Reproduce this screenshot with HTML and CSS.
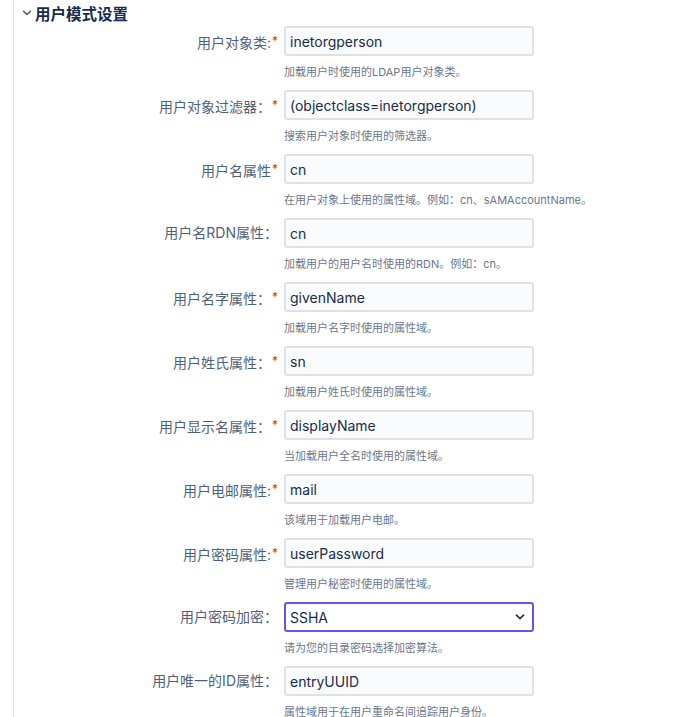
FILE: index.html
```html
<!DOCTYPE html>
<html lang="zh-CN">
<head>
    <meta charset="UTF-8">
    <title>用户模式设置</title>
    <link rel="stylesheet" href="styles.css">
</head>
<body>
    <div class="panel">
        <h2 class="section-title">
            <svg class="chevron" width="10" height="6" viewBox="0 0 10 6"><path d="M1.5 1.2 5 4.6 8.5 1.2" fill="none" stroke="#42526e" stroke-width="1.4" stroke-linecap="round" stroke-linejoin="round"/></svg>
            用户模式设置
        </h2>
        <form class="schema-form">
            <div class="form-row">
                <label for="userObjectClass">用户对象类:<span class="req">*</span></label>
                <div class="field">
                    <input type="text" id="userObjectClass" value="inetorgperson">
                    <div class="help">加载用户时使用的LDAP用户对象类。</div>
                </div>
            </div>
            <div class="form-row">
                <label for="userObjectFilter">用户对象过滤器：<span class="req">*</span></label>
                <div class="field">
                    <input type="text" id="userObjectFilter" value="(objectclass=inetorgperson)">
                    <div class="help">搜索用户对象时使用的筛选器。</div>
                </div>
            </div>
            <div class="form-row">
                <label for="userNameAttr">用户名属性<span class="req">*</span></label>
                <div class="field">
                    <input type="text" id="userNameAttr" value="cn">
                    <div class="help">在用户对象上使用的属性域。例如：cn、sAMAccountName。</div>
                </div>
            </div>
            <div class="form-row">
                <label for="userNameRdn">用户名RDN属性：</label>
                <div class="field">
                    <input type="text" id="userNameRdn" value="cn">
                    <div class="help">加载用户的用户名时使用的RDN。例如：cn。</div>
                </div>
            </div>
            <div class="form-row">
                <label for="firstNameAttr">用户名字属性：<span class="req">*</span></label>
                <div class="field">
                    <input type="text" id="firstNameAttr" value="givenName">
                    <div class="help">加载用户名字时使用的属性域。</div>
                </div>
            </div>
            <div class="form-row">
                <label for="lastNameAttr">用户姓氏属性：<span class="req">*</span></label>
                <div class="field">
                    <input type="text" id="lastNameAttr" value="sn">
                    <div class="help">加载用户姓氏时使用的属性域。</div>
                </div>
            </div>
            <div class="form-row">
                <label for="displayNameAttr">用户显示名属性：<span class="req">*</span></label>
                <div class="field">
                    <input type="text" id="displayNameAttr" value="displayName">
                    <div class="help">当加载用户全名时使用的属性域。</div>
                </div>
            </div>
            <div class="form-row">
                <label for="emailAttr">用户电邮属性:<span class="req">*</span></label>
                <div class="field">
                    <input type="text" id="emailAttr" value="mail">
                    <div class="help">该域用于加载用户电邮。</div>
                </div>
            </div>
            <div class="form-row">
                <label for="passwordAttr">用户密码属性:<span class="req">*</span></label>
                <div class="field">
                    <input type="text" id="passwordAttr" value="userPassword">
                    <div class="help">管理用户秘密时使用的属性域。</div>
                </div>
            </div>
            <div class="form-row">
                <label for="passwordEncryption">用户密码加密：</label>
                <div class="field">
                    <div class="select-wrap">
                        <select id="passwordEncryption">
                            <option>SSHA</option>
                            <option>SHA</option>
                            <option>MD5</option>
                            <option>PLAINTEXT</option>
                        </select>
                        <svg class="select-arrow" width="10" height="6" viewBox="0 0 10 6"><path d="M1.5 1.2 5 4.6 8.5 1.2" fill="none" stroke="#253858" stroke-width="1.8" stroke-linecap="round" stroke-linejoin="round"/></svg>
                    </div>
                    <div class="help">请为您的目录密码选择加密算法。</div>
                </div>
            </div>
            <div class="form-row">
                <label for="uniqueIdAttr">用户唯一的ID属性：</label>
                <div class="field">
                    <input type="text" id="uniqueIdAttr" value="entryUUID">
                    <div class="help">属性域用于在用户重命名间追踪用户身份。</div>
                </div>
            </div>
        </form>
    </div>
</body>
</html>
```

FILE: styles.css
```css
body {
    margin: 0;
    background: #fff;
    font-family: Inter, "Noto Sans CJK SC", sans-serif;
    color: #172b4d;
}
.panel {
    margin-left: 13px;
    border-left: 1px solid #dfe1e6;
    padding-left: 7px;
    min-height: 717px;
}
.section-title {
    display: flex;
    align-items: center;
    gap: 3px;
    margin: 0;
    height: 25px;
    padding-bottom: 1px;
    font-size: 15.5px;
    font-weight: 600;
    color: #172b4d;
}
.chevron {
    margin-left: 1px;
}
.schema-form {
    display: flex;
    flex-direction: column;
    gap: 10px;
}
.form-row {
    display: grid;
    grid-template-columns: 257px 1fr;
    column-gap: 6px;
}
.form-row label {
    height: 30px;
    line-height: 30px;
    text-align: right;
    font-size: 14px;
    color: #505f79;
}
.req {
    color: #de350b;
    font-size: 12px;
    vertical-align: 3px;
    margin-left: 1px;
}
.field input,
.field select {
    box-sizing: border-box;
    width: 250px;
    height: 30px;
    padding: 0 4px;
    border: 2px solid #dfe1e6;
    border-radius: 3px;
    background: #fafbfc;
    font-family: inherit;
    font-size: 14px;
    color: #172b4d;
    outline: none;
}
.select-wrap {
    position: relative;
    width: 250px;
}
.field select {
    appearance: none;
    border-color: #6554f5;
    background: #fff;
}
.select-arrow {
    position: absolute;
    right: 9px;
    top: 12px;
    pointer-events: none;
}
.help {
    margin-top: 8px;
    font-size: 11px;
    line-height: 16px;
    color: #6b778c;
    white-space: nowrap;
}
```
